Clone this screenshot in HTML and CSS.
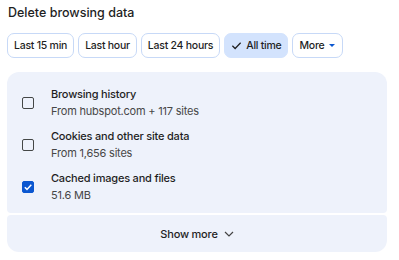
FILE: index.html
```html
<!DOCTYPE html>
<html lang="en">
  <head>
    <meta charset="utf-8" />
    <title>Delete browsing data</title>
    <link rel="stylesheet" href="styles.css">
  </head>
  <body>
    <div class="dialog">
      <h1>Delete browsing data</h1>
      <div class="chips">
        <button class="chip">Last 15 min</button>
        <button class="chip">Last hour</button>
        <button class="chip">Last 24 hours</button>
        <button class="chip selected">
          <svg width="11" height="11" viewBox="0 0 12 12"><path d="M1.5 6.3l3 3 6-6.3" fill="none" stroke="#1f1f1f" stroke-width="1.3"/></svg>
          All time
        </button>
        <button class="chip">
          More
          <svg width="8" height="5" viewBox="0 0 8 5"><path d="M1 1h6l-3 3z" fill="#0b57d0"/></svg>
        </button>
      </div>
      <div class="panel">
        <div class="options">
          <label class="option">
            <span class="box"></span>
            <span class="text">
              <span class="title">Browsing history</span>
              <span class="sub">From hubspot.com + 117 sites</span>
            </span>
          </label>
          <label class="option">
            <span class="box"></span>
            <span class="text">
              <span class="title">Cookies and other site data</span>
              <span class="sub">From 1,656 sites</span>
            </span>
          </label>
          <label class="option">
            <span class="box checked">
              <svg width="10" height="10" viewBox="0 0 10 10"><path d="M1.8 5.2l2.2 2.2 4.3-4.6" fill="none" stroke="#fff" stroke-width="1.5"/></svg>
            </span>
            <span class="text">
              <span class="title">Cached images and files</span>
              <span class="sub">51.6 MB</span>
            </span>
          </label>
        </div>
        <button class="show-more">
          Show more
          <svg width="10" height="6" viewBox="0 0 10 6"><path d="M1 1l4 4 4-4" fill="none" stroke="#444" stroke-width="1.2"/></svg>
        </button>
      </div>
    </div>
  </body>
</html>
```

FILE: styles.css
```css
body {
  margin: 0;
  background: #fff;
  font-family: Inter, "Noto Sans", sans-serif;
  color: #1f1f1f;
}

.dialog {
  padding: 3px 12px 0 7px;
}

h1 {
  font-size: 12.5px;
  font-weight: 500;
  margin: 0 0 0 1px;
  line-height: 20px;
}

.chips {
  display: flex;
  gap: 4px;
  margin-top: 10px;
}

.chip {
  flex-shrink: 0;
  margin: 0;
  white-space: nowrap;
  font-family: inherit;
  font-size: 10.5px;
  letter-spacing: -0.25px;
  font-weight: 500;
  color: #1f1f1f;
  background: #fff;
  border: 1px solid #c7d9f7;
  border-radius: 7px;
  height: 25px;
  padding: 0 6px;
  display: flex;
  align-items: center;
  gap: 4px;
}

.chip.selected {
  background: #d3e3fd;
  border-color: #d3e3fd;
}

.panel {
  margin-top: 14px;
  display: flex;
  flex-direction: column;
  gap: 2px;
}

.options {
  background: #eef2fb;
  border-radius: 12px 12px 4px 4px;
  padding: 10px 0 0 15px;
  height: 131px;
}

.option {
  display: flex;
  align-items: center;
  gap: 17px;
  height: 42px;
}

.box {
  width: 10px;
  height: 10px;
  border: 1.5px solid #444746;
  border-radius: 2px;
  display: flex;
  align-items: center;
  justify-content: center;
}

.box.checked {
  background: #0b57d0;
  border-color: #0b57d0;
}

.text {
  display: flex;
  flex-direction: column;
  gap: 2px;
  line-height: 15px;
  letter-spacing: -0.2px;
}

.title {
  font-size: 11px;
  font-weight: 500;
}

.sub {
  font-size: 11px;
  color: #474747;
}

.show-more {
  margin: 0;
  font-family: inherit;
  font-size: 11px;
  letter-spacing: -0.2px;
  font-weight: 500;
  color: #1f1f1f;
  background: #eef2fb;
  border: 0;
  border-radius: 4px 4px 12px 12px;
  height: 37px;
  display: flex;
  align-items: center;
  justify-content: center;
  gap: 6px;
}
```
